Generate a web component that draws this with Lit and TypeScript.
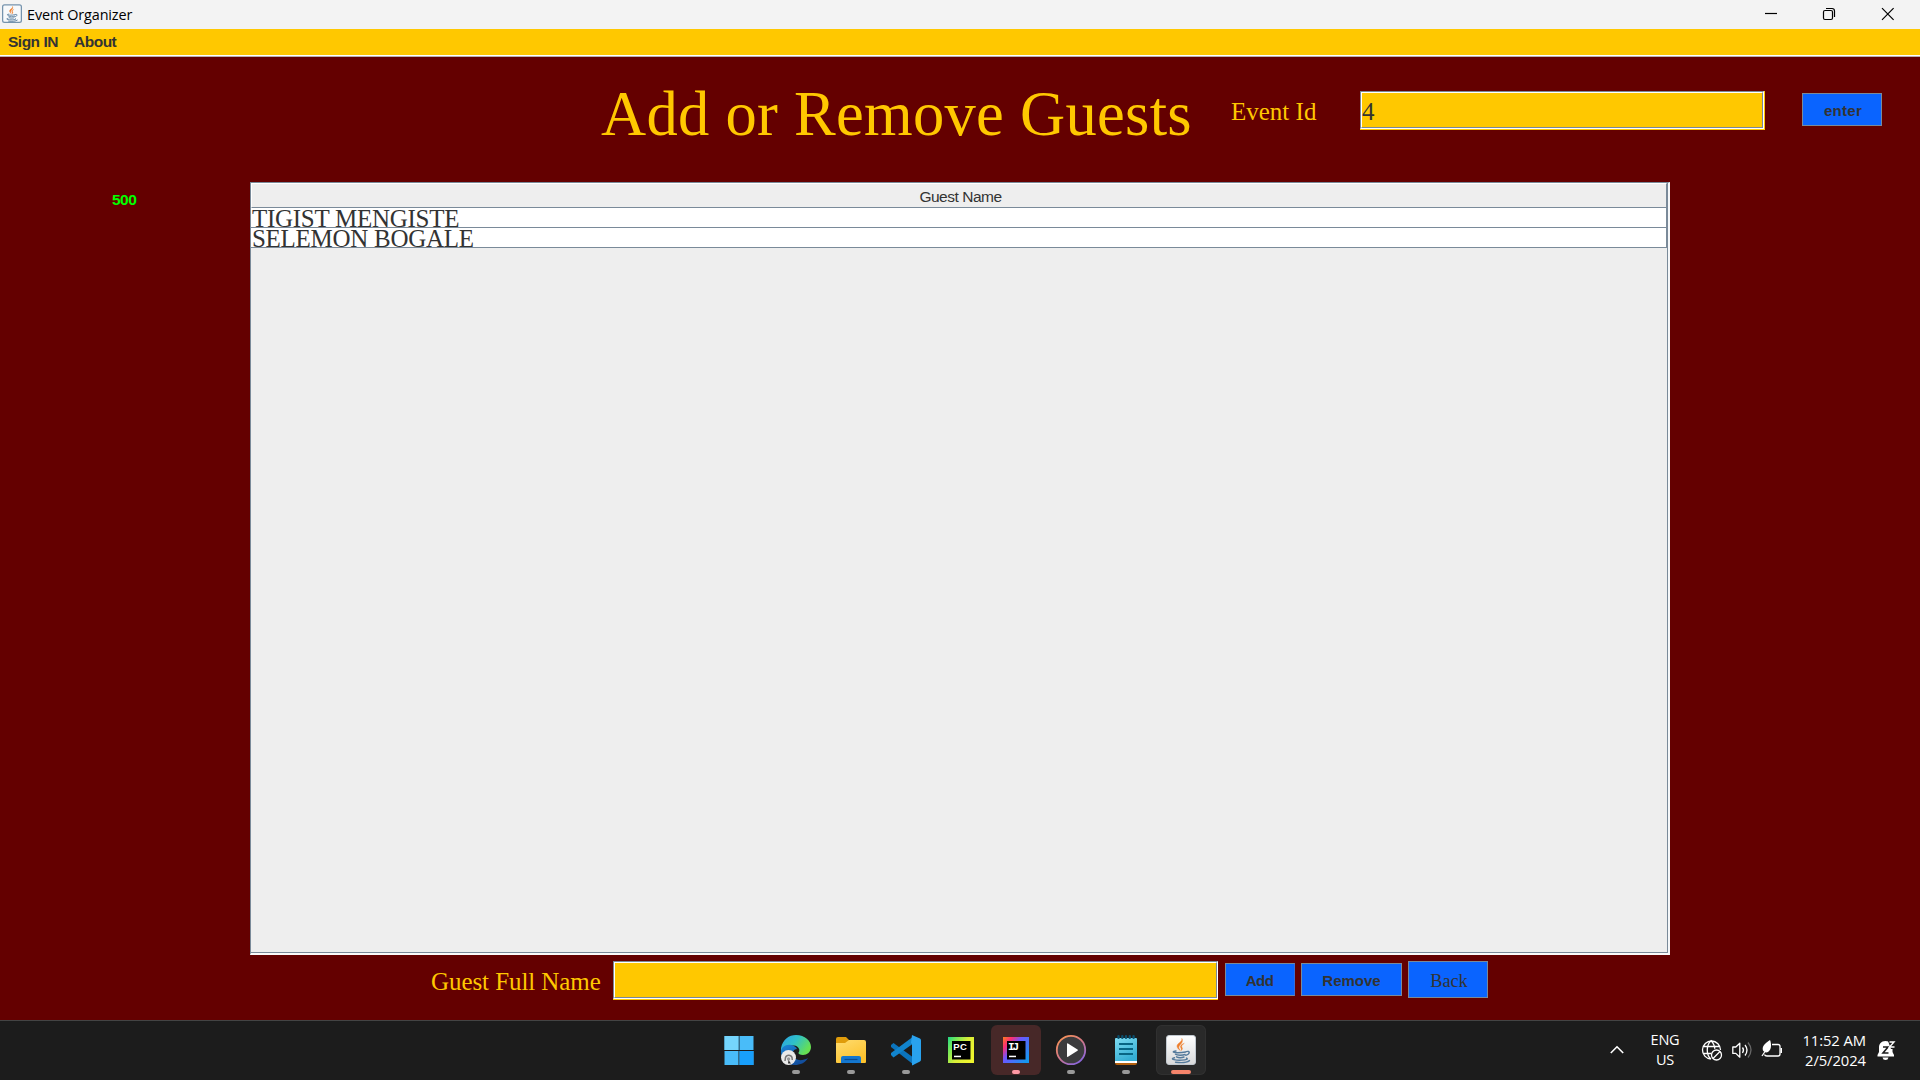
import { LitElement, html, css, svg } from "lit";
import { customElement } from "lit/decorators.js";

const javaCup = svg`
  <path d="M16.8 3.5c1.6 3-5.2 4.700-4.700 8 .2 1.600 1.500 2.600 2.700 3.700-.7-1.600-1.600-2.600-.6-4.200 1.300-2 4.300-3.600 2.600-7.500z" fill="#ee7d2b" stroke="#ee7d2b" stroke-width=".5"/>
  <path d="M19.300 8.300c-2.500 1-4.600 2.400-3.500 4.400.6 1 .9 1.800-.1 3 2-1 2.100-2.300 1.200-3.500-.9-1.300.5-2.600 2.400-3.900z" fill="#ee7d2b" stroke="#ee7d2b" stroke-width=".4"/>
  <g fill="none" stroke="#557a9b" stroke-width="1.400" stroke-linecap="round">
    <path d="M11 16c-4 .6-3.500 1.600.6 1.700 3.500.1 6-.1 9-.7"/>
    <path d="M10.500 19.300c1.600 1.300 7.300 1.200 9.600.2M11.500 21.800c1.700.9 5.500.9 7.500.2"/>
    <path d="M21.300 16.600c4-1.200 4 2.300-.5 3.700"/>
    <path d="M9.500 22.800c-6 1.300 2 2.700 7.500 2.300 4.500-.2 6.500-1 4.500-2M10.500 27.200c6 .8 11.500.3 14-1.600"/>
  </g>`;

const icons = {
  windows: svg`<path d="M-.5 1h14v14h-14zM14.500 1h14v14h-14zM-.5 16h14v14h-14zM14.500 16h14v14h-14z" fill="#49bcf9"/>
    <path d="M-.5 1h14v14h-14z" fill="#75d5fc"/><path d="M14.500 16h14v14h-14z" fill="#189ffb"/>`,
  edge: svg`<defs><linearGradient id="e1" x2="1" y2=".5"><stop stop-color="#2b9fe8"/><stop offset=".5" stop-color="#2fc0c8"/><stop offset="1" stop-color="#66e052"/></linearGradient>
    <linearGradient id="e2" x2=".6" y2="1"><stop stop-color="#1b86d8"/><stop offset="1" stop-color="#124d9c"/></linearGradient></defs>
    <path d="M1 13C3 4 9 0 16 0c9 0 15 6 15 12 0 5-4 8-8 8-3 0-5-1-4.500-2.500 2-2 .5-6.500-4.500-7C8 10 3 12 1 17z" fill="url(#e1)"/>
    <path d="M1 17c0-5 5-8 10-7 3 .5 5 2 6 4-3 0-5 3-4 6 1 5 8 7 15 3-3 5-8 7-13 7C7 30 1 24 1 17z" fill="url(#e2)"/>
    <circle cx="8.500" cy="22.500" r="7.500" fill="#e9e9e9"/>
    <path d="M5 26l.5-3.500c1-3 5.500-3 6.500 0l.3 2.500" fill="none" stroke="#777" stroke-width="1.500"/><circle cx="8.600" cy="24" r="1.700" fill="#999"/><path d="M8.500 25l2.500 3.500H8z" fill="#333"/>`,
  folder: svg`<defs><linearGradient id="f" x2=".6" y2="1"><stop stop-color="#ffdc70"/><stop offset="1" stop-color="#fdc22c"/></linearGradient></defs>
    <path d="M1 4q0-2 2-2h8l3 3v6H1z" fill="#e09c0b"/><path d="M1 8h9l4-3h15q2 0 2 2v20q0 1-1 1H2q-1 0-1-1z" fill="url(#f)"/>
    <path d="M6 28v-5q0-2 2-2h16q2 0 2 2v5z" fill="#1477cf"/><path d="M9.500 24.500h13" stroke="#0a4c92" stroke-width="1.200"/>`,
  code: svg`<path d="M1 10l2.500-2L24 23v7L1 12z" fill="#0b74bd"/><path d="M1 20l2.500 2.500L24 8V1L1 18z" fill="#1184cd"/>
    <path d="M22 0l8 3.500q1 .5 1 2v19q0 1.500-1 2L22 30.500V9l-1-1z" fill="#29a2ee"/>`,
  pycharm: svg`<defs><linearGradient id="p" x2="1" y2=".6"><stop stop-color="#20d789"/><stop offset=".25" stop-color="#71e85a"/><stop offset=".6" stop-color="#d8ee38"/><stop offset="1" stop-color="#eef52e"/></linearGradient></defs>
    <path d="M3 2h26v26H3z" fill="url(#p)"/><path d="M7 6h18.500v18.500H7z"/><path d="M9 20.700h7v1.500H9z" fill="#fff"/>
    <text x="8.300" y="15" class="logo" textLength="13.500">PC</text>`,
  idea: svg`<defs><linearGradient id="j" x2="1" y2=".8"><stop stop-color="#fc801d"/><stop offset=".22" stop-color="#fe2d72"/><stop offset=".45" stop-color="#6b57ff"/><stop offset="1" stop-color="#1597ef"/></linearGradient></defs>
    <path d="M3 2h26v26H3z" fill="url(#j)"/><path d="M7 6h18.500v18.500H7z"/><path d="M9 20.700h7v1.500H9z" fill="#fff"/>
    <text x="8" y="15" class="logo mono" textLength="11">IJ</text>`,
  player: svg`<defs><linearGradient id="m" x2=".7" y2="1"><stop stop-color="#ff9950"/><stop offset=".5" stop-color="#d87a80"/><stop offset="1" stop-color="#8c66dc"/></linearGradient></defs>
    <circle cx="16" cy="15" r="14.200" fill="#3b3b3d" stroke="url(#m)" stroke-width="1.800"/><path d="M12 9q0-1 1-.5l9.500 6q1 .6 0 1.200L13 21.800q-1 .5-1-.5z" fill="#fff"/>`,
  notepad: svg`<defs><linearGradient id="n" x2=".5" y2="1"><stop stop-color="#7edcf2"/><stop offset="1" stop-color="#35aed4"/></linearGradient></defs>
    <path d="M5 26h22v2q0 2-2 2H7q-2 0-2-2z" fill="#b3600e"/><path d="M5 25h22v3H5z" fill="#fff"/><path d="M5 4q0-1 1-1h20q1 0 1 1v22H5z" fill="url(#n)"/>
    <path d="M9 8.900h14M9 13.900h14M9 18.900h14" stroke="#086584" stroke-width="2"/>
    <path d="M8.500 1.200v1.600M12.300 1.200v1.600M16 1.200v1.600M19.800 1.200v1.600M23.600 1.200v1.600" stroke="#0b4e6c" stroke-width="2.400" stroke-linecap="round"/>`,
  java: svg`<defs><linearGradient id="v" x2="0" y2="1"><stop stop-color="#fff"/><stop offset="1" stop-color="#d9d9da"/></linearGradient></defs>
    <rect x="1.500" y=".5" width="29" height="29" rx="2.500" fill="url(#v)" stroke="#c2c9d0"/>${javaCup}`,
};

const apps = [
  { icon: icons.windows, state: "" },
  { icon: icons.edge, state: "open" },
  { icon: icons.folder, state: "open" },
  { icon: icons.code, state: "open" },
  { icon: icons.pycharm, state: "" },
  { icon: icons.idea, state: "open alert" },
  { icon: icons.player, state: "open" },
  { icon: icons.notepad, state: "open" },
  { icon: icons.java, state: "open active" },
];

const guests = ["TIGIST MENGISTE", "SELEMON BOGALE"];

@customElement("app-root")
export class AppRoot extends LitElement {
  static styles = css`
    :host { display: flex; flex-direction: column; width: 1920px; height: 1080px; overflow: hidden; background: #640000; font: 15px "Liberation Sans", sans-serif; color: #333; }
    * { box-sizing: border-box; }
    span, div { white-space: nowrap; }
    svg { display: block; flex: none; }
    .titlebar { display: flex; height: 29px; flex: none; background: #f3f3f3; color: #000; }
    .app-icon { margin: 4px 0 0 2px; }
    .app-name { margin-left: 5px; font: 14.400px/29px "Open Sans", sans-serif; letter-spacing: -0.120px; flex: 1; }
    .controls { margin-top: 7px; }
    .menubar { display: flex; flex: none; height: 28px; padding-left: 8px; gap: 16px; background: #ffc800; border-bottom: 1px solid #b8b0b0; box-shadow: inset 0 -1px #fff; font-weight: bold; font-size: 15.500px; line-height: 26px; letter-spacing: -0.500px; }
    .menu-1 { width: 50px; }
    .heading { display: flex; flex: none; height: 125px; align-items: flex-start; padding-left: 601px; color: #ffc800; font-family: "Liberation Serif", serif; }
    .title { width: 630px; font-size: 62.500px; line-height: 114px; letter-spacing: 0.300px; }
    .label { font: 25px/29px "Liberation Serif", serif; color: #ffc800; }
    .event-label { width: 129px; margin-top: 40px; }
    .field { display: flex; background: #ffc800; height: 39px; padding: 0 1px 1px 0; }
    .bevel { display: flex; flex: 1; border: 1px solid; border-color: #7a8a99 #fff #fff #7a8a99; }
    .inner { flex: 1; border: 1px solid; border-color: #fff #7a8a99 #7a8a99 #fff; font: 25px/37px "Liberation Serif", serif; color: #333; }
    .event-field { width: 405px; margin-top: 34px; }
    .button { height: 33px; background: #0a64ff; border: 1px solid #7a8a99; font: bold 15px/33px "Liberation Sans", sans-serif; text-align: center; color: #333; }
    .enter { width: 80px; margin: 36px 0 0 37px; letter-spacing: 0.300px; padding-left: 2px; }
    .content { display: flex; flex: none; height: 773px; }
    .count { width: 250px; padding-left: 112px; font-weight: bold; font-size: 15.500px; letter-spacing: -0.550px; line-height: 36px; color: #0f0; }
    .scroll { width: 1420px; background: #eee; border: 1px solid #7a8a99; border-width: 1px 2px 2px 1px; border-right-color: #f4f6f8; border-bottom-color: #fbfbfb; display: flex; }
    .view { flex: 1; border: 1px solid #7a8a99; border-width: 0 1px 1px 0; }
    .thead { height: 25px; border: 1px solid; border-color: #fff #7a8a99 #7a8a99 #fff; font-size: 15.500px; letter-spacing: -0.480px; line-height: 26px; text-align: center; padding-left: 3px; }
    .row { height: 20px; background: #fff; border: 1px solid #7a8a99; border-width: 0 1px 1px 0; padding-left: 1px; font: 25px/21px "Liberation Serif", serif; letter-spacing: -0.280px; }
    .form { display: flex; flex: none; height: 65px; align-items: flex-start; padding-left: 431px; }
    .guest-label { width: 182px; margin-top: 12px; letter-spacing: -0.070px; }
    .guest-field { width: 605px; margin-top: 6px; padding: 0 0 1px; }
    .add { width: 70px; margin: 8px 0 0 7px; border-right-color: #3a6ed6; letter-spacing: -0.500px; padding-right: 1px; }
    .remove { width: 101px; margin: 8px 0 0 6px; }
    .back { width: 80px; height: 37px; margin: 6px 0 0 6px; padding-left: 2px; font: 18.200px/38px "Liberation Serif", serif; }
    .taskbar { display: flex; flex: none; height: 60px; border-top: 1px solid #444; background: #1c1c1c; color: #fff; padding-left: 716px; }
    .apps { display: flex; gap: 5px; width: 894px; padding-top: 4px; }
    .slot { display: flex; flex-direction: column; align-items: center; width: 50px; height: 50px; border-radius: 6px; padding-top: 10px; gap: 5px; }
    .open::after { content: ""; width: 8px; height: 4px; border-radius: 2px; background: #999; }
    .alert { background: #472828; }
    .alert::after { background: #ff99a4; }
    .active { background: #292929; box-shadow: inset 0 0 0 1px #303030; }
    .active::after { width: 20px; background: #f5846b; }
    .logo { font: bold 9.500px "Liberation Sans", sans-serif; fill: #fff; }
    .mono { font-family: "Liberation Mono", monospace; font-size: 11px; }
    .chev { margin-top: 24px; }
    .lang { width: 60px; margin: 9px 0 0 11px; text-align: center; font: 14.500px/20px "Open Sans", sans-serif; letter-spacing: -0.250px; }
    .status { margin: 18px 0 0 6px; }
    .clock { width: 83px; margin: 9px 0 0; text-align: right; font: 14.800px/20px "Open Sans", sans-serif; letter-spacing: -0.080px; }
    .bell { margin: 19px 0 0 11px; }
  `;

  render() {
    return html`
      <div class="titlebar">
        <svg class="app-icon" width="20" height="19" viewBox="0 0 32 30"><rect x="1" y="1" width="30" height="28" rx="3" fill="#f7f9fb" stroke="#7593ad" stroke-width="2"/>${javaCup}</svg>
        <span class="app-name">Event Organizer</span>
        <svg class="controls" width="156" height="14" viewBox="1764 7 156 14" fill="none" stroke="#000" stroke-width="1.200">
          <path d="M1765 13.500h12"/><rect x="1823.500" y="10.500" width="9" height="9" rx="1.500"/><path d="M1826 8.500h6q2.500 0 2.500 2.500v6"/><path d="M1882 8.200l11.600 11.600M1893.600 8.200L1882 19.800"/>
        </svg>
      </div>
      <div class="menubar"><span class="menu-1">Sign IN</span><span>About</span></div>
      <div class="heading">
        <span class="title">Add or Remove Guests</span>
        <span class="label event-label">Event Id</span>
        <div class="field event-field"><div class="bevel"><div class="inner">4</div></div></div>
        <div class="button enter">enter</div>
      </div>
      <div class="content">
        <div class="count">500</div>
        <div class="scroll"><div class="view">
          <div class="thead">Guest Name</div>
          ${guests.map((g) => html`<div class="row">${g}</div>`)}
        </div></div>
      </div>
      <div class="form">
        <span class="label guest-label">Guest Full Name</span>
        <div class="field guest-field"><div class="bevel"><div class="inner"></div></div></div>
        <div class="button add">Add</div>
        <div class="button remove">Remove</div>
        <div class="button back">Back</div>
      </div>
      <div class="taskbar">
        <div class="apps">
          ${apps.map((a) => html`<div class="slot ${a.state}"><svg width="32" height="30" viewBox="0 0 32 30" overflow="visible">${a.icon}</svg></div>`)}
        </div>
        <svg class="chev" width="14" height="9" viewBox="0 0 14 9" fill="none" stroke="#fff" stroke-width="1.600"><path d="M.8 8L7 1.800 13.200 8"/></svg>
        <div class="lang">ENG<br>US</div>
        <svg class="status" width="82" height="24" viewBox="1701 1039 82 24" fill="none" stroke="#fff" stroke-width="1.300">
          <path d="M1711 1059a9 9 0 1 1 9.500-9M1703 1046.500h17M1703 1053.500h8M1711 1059c-5-4-5-14 0-18.300 2.500 2.500 3.800 5 3.700 8"/>
          <circle cx="1716.500" cy="1055" r="5"/><path d="M1713 1058.500l7-7"/>
          <path d="M1732.800 1047h3l4-3.800v14l-4-3.800h-3z" stroke-linejoin="round"/><path d="M1742.500 1047.500q2 2.500 0 5.500M1745 1045q4 5 0 10.500"/><path d="M1748 1042.500q6 7.500 0 15" stroke="#666"/>
          <path d="M1772 1044.500h6q2 0 2 2v7.500q0 2-2 2h-11q-2 0-2.500-1.500"/><path d="M1780.500 1048h1.500v5h-1.500z" fill="#fff" stroke="none"/>
          <path d="M1770 1040c2 5 1 10-2 12-2 1-4 0-5-1.500-1.500-4 2-7 7-10.500z" fill="#fff" stroke="none"/><path d="M1762 1056l4-6"/>
        </svg>
        <div class="clock">11:52 AM<br>2/5/2024</div>
        <svg class="bell" width="19" height="21" viewBox="0 0 19 21"><path d="M8.500 1C4 1 2 4 2 7.500V12L.5 15v1.500H17V15l-1.500-3V7.500C15.500 4 13 1 8.500 1zM5.500 17.500h6q-.5 2.500-3 2.500t-3-2.500z" fill="#fff"/>
          <path d="M6 7h5l-5 6h5.500" fill="none" stroke="#1c1c1c" stroke-width="1.600"/><path d="M11 1h6.500v8H14z" fill="#1c1c1c"/><path d="M12.500 2h4.500l-4.500 5h5" fill="none" stroke="#fff" stroke-width="1.400"/></svg>
      </div>`;
  }
}
